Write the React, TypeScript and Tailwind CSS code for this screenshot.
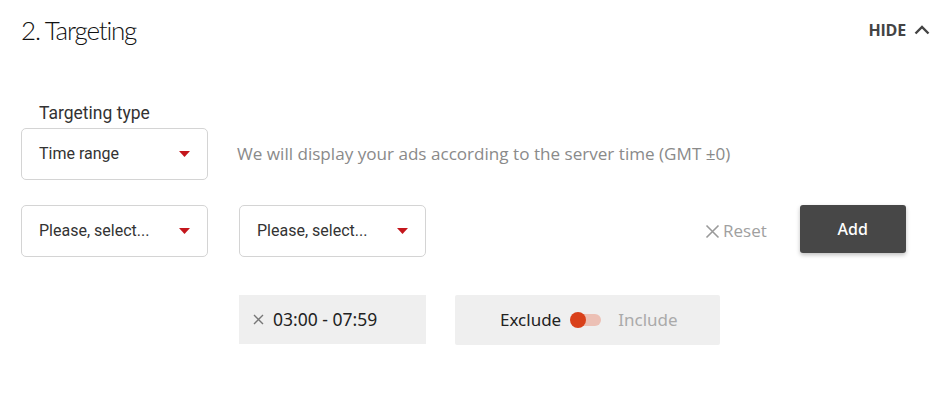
import React from "react";

const Caret = () => (
  <svg width="11" height="6" viewBox="0 0 11 6" className="shrink-0">
    <path d="M0 0 H11 L5.5 6 Z" fill="#c4161c" />
  </svg>
);

const Select: React.FC<{ label: string }> = ({ label }) => (
  <div className="w-[187px] h-[52px] border border-[#d4d4d4] rounded-[5px] bg-white flex items-center justify-between pl-[17px] pr-[17px]">
    <span className="text-[16px] text-[#333] font-['Roboto',sans-serif]">{label}</span>
    <Caret />
  </div>
);

const App: React.FC = () => {
  return (
    <div className="w-[946px] h-[396px] bg-white pl-[21px] font-['Noto_Sans',sans-serif]">
      <div className="flex items-center justify-between pt-[13px] pr-[16px]">
        <h1 className="text-[26px] leading-[34px] font-light text-[#111] font-['Lato',sans-serif] tracking-[-1.2px]">
          2. Targeting
        </h1>
        <button className="flex items-center gap-[8px] text-[16px] font-bold text-[#444] font-['Open_Sans',sans-serif] tracking-[-0.2px]">
          HIDE
          <svg width="16" height="10" viewBox="0 0 16 10">
            <path d="M1.5 8.5 L8 2 L14.5 8.5" fill="none" stroke="#444" strokeWidth="2.4" />
          </svg>
        </button>
      </div>

      <div className="mt-[55px] pl-[18px] text-[17.5px] leading-[22px] text-[#333] font-['Roboto',sans-serif]">
        Targeting type
      </div>

      <div className="mt-[4px] flex items-center gap-[29px]">
        <Select label="Time range" />
        <span className="text-[17.1px] text-[#8a8a8a] font-['Open_Sans',sans-serif]">
          We will display your ads according to the server time (GMT ±0)
        </span>
      </div>

      <div className="mt-[25px] flex items-center">
        <Select label="Please, select..." />
        <div className="ml-[31px]">
          <Select label="Please, select..." />
        </div>
        <button className="ml-[279px] flex items-center gap-[3px] text-[17px] text-[#a0a0a0] font-['Open_Sans',sans-serif]">
          <svg width="15" height="15" viewBox="0 0 15 15">
            <path d="M1.5 1.5 L13.5 13.5 M13.5 1.5 L1.5 13.5" stroke="#9a9a9a" strokeWidth="1.6" />
          </svg>
          Reset
        </button>
        <button className="ml-[33px] self-start w-[106px] h-[48px] bg-[#474747] rounded-[3px] text-white text-[16px] font-medium shadow-[0_2px_4px_rgba(0,0,0,0.25)]">
          Add
        </button>
      </div>

      <div className="mt-[38px] flex items-start pl-[218px]">
        <div className="w-[187px] h-[49px] bg-[#efefef] flex items-center pl-[14px] gap-[9px]">
          <svg width="11" height="11" viewBox="0 0 11 11">
            <path d="M1 1 L10 10 M10 1 L1 10" stroke="#777" strokeWidth="1.4" />
          </svg>
          <span className="text-[17.5px] text-[#222]">03:00 - 07:59</span>
        </div>
        <div className="ml-[29px] w-[265px] h-[50px] bg-[#efefef] rounded-[2px] flex items-center pl-[45px]">
          <span className="text-[17px] text-[#222]">Exclude</span>
          <div className="relative ml-[9px] w-[31px] h-[16px] flex items-center">
            <div className="w-[28px] h-[12px] ml-[3px] rounded-full bg-[#ecc0b5]" />
            <div className="absolute left-0 top-0 w-[16px] h-[16px] rounded-full bg-[#d9401a]" />
          </div>
          <span className="ml-[17px] text-[17px] text-[#aaa]">Include</span>
        </div>
      </div>
    </div>
  );
};

export default App;
